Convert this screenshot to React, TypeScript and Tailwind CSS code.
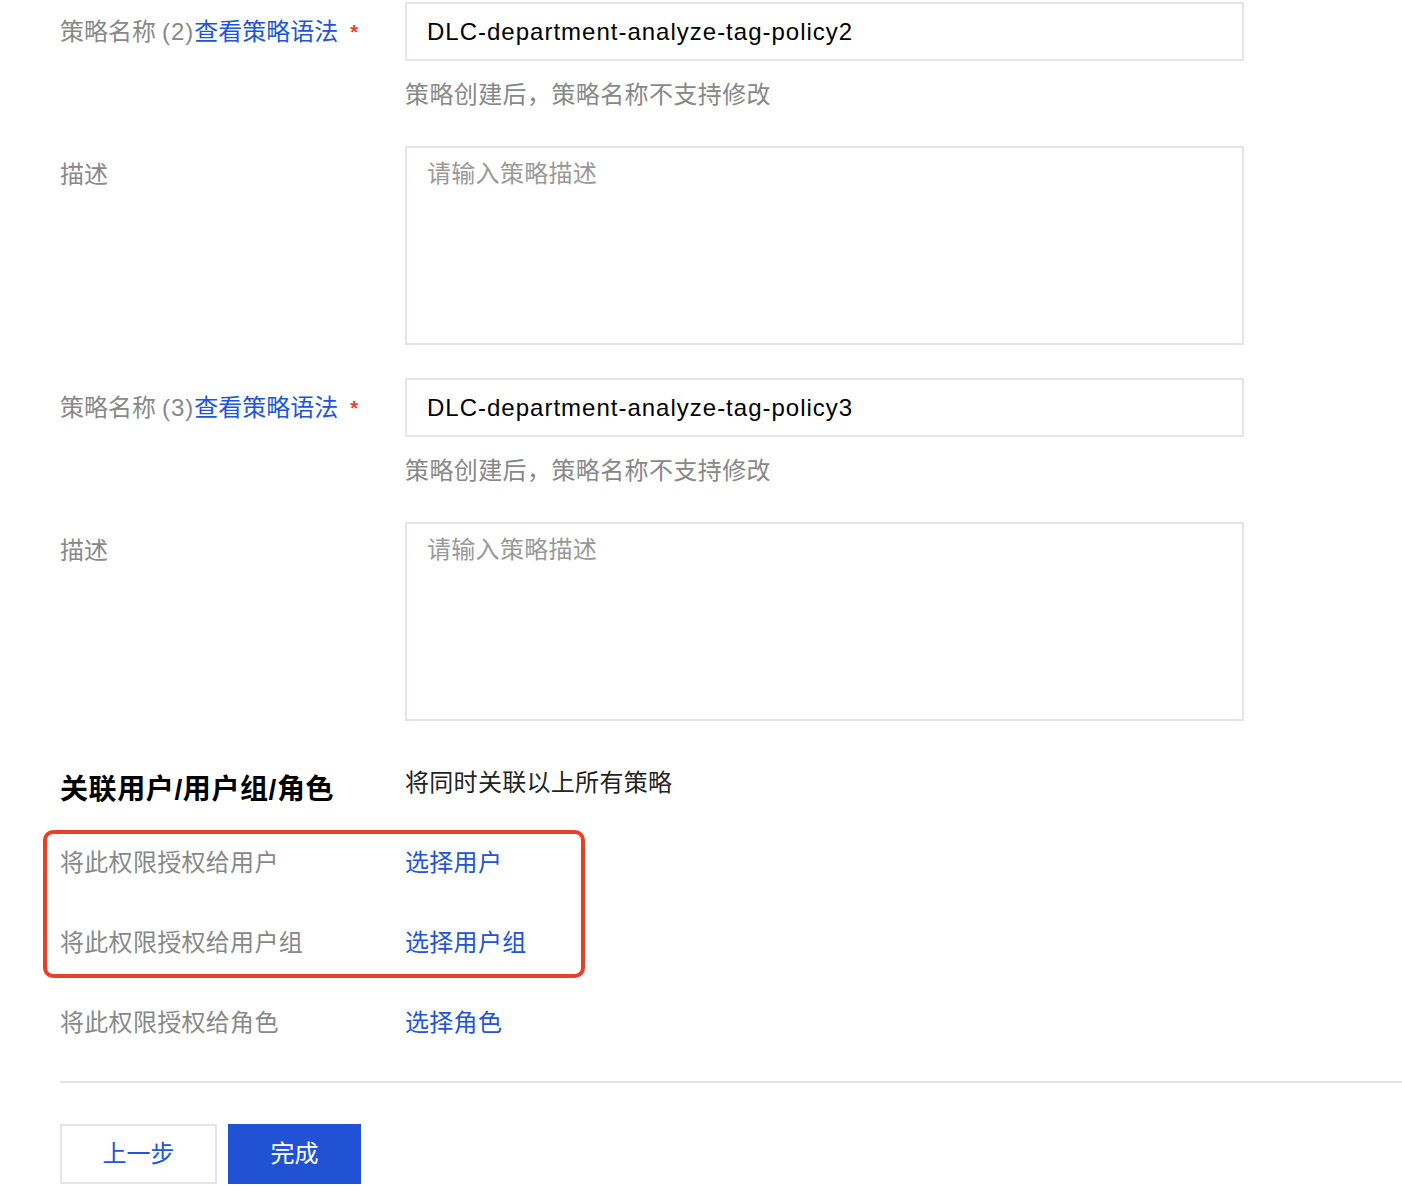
import React from 'react';

const font = { fontFamily: '"Liberation Sans", "Noto Sans CJK SC", sans-serif' };

function NameRow({ index, value }: { index: number; value: string }) {
  return (
    <>
      <div className="flex">
        <div className="w-[345px] h-[59px] flex items-center text-[24px] text-[#888888] whitespace-nowrap">
          策略名称 <span className="tracking-[1px] ml-[6px]">({index})</span>
          <span className="text-[#2154d6]">查看策略语法</span>
          <span className="text-[#e5432f] text-[20px] font-bold ml-[12px]">*</span>
        </div>
        <div className="w-[839px] h-[59px] border-2 border-[#e4e4ea] flex items-center pl-[20px] text-[24px] tracking-[1px] text-black">
          {value}
        </div>
      </div>
      <div className="ml-[345px] mt-[18px] leading-[32px] text-[24px] tracking-[0.4px] text-[#888888]">
        策略创建后，策略名称不支持修改
      </div>
      <div className="flex mt-[35px]">
        <div className="w-[345px] pt-[13px] leading-[32px] text-[24px] text-[#888888]">描述</div>
        <div className="w-[839px] h-[199px] border-2 border-[#e4e4ea] pt-[10px] pl-[20px] leading-[32px] text-[24px] tracking-[0.3px] text-[#999999]">
          请输入策略描述
        </div>
      </div>
    </>
  );
}

function GrantRow({ label, action }: { label: string; action: string }) {
  return (
    <div className="flex h-[32px] items-center leading-[32px] text-[24px] tracking-[0.3px]">
      <div className="w-[345px] text-[#888888]">{label}</div>
      <div className="text-[#2154d6]">{action}</div>
    </div>
  );
}

export default function App() {
  return (
    <div className="min-h-screen bg-white pl-[60px] pt-[2px]" style={font}>
      <NameRow index={2} value="DLC-department-analyze-tag-policy2" />
      <div className="mt-[33px]">
        <NameRow index={3} value="DLC-department-analyze-tag-policy3" />
      </div>

      {/* 关联 */}
      <div className="flex items-start mt-[46px]">
        <div className="w-[345px] pt-[4px] leading-[38px] text-[28px] font-bold tracking-[0.6px] text-black">
          关联用户/用户组/角色
        </div>
        <div className="leading-[32px] text-[24px] tracking-[0.3px] text-[#222222]">将同时关联以上所有策略</div>
      </div>

      <div className="relative mt-[38px] flex flex-col gap-[48px]">
        <GrantRow label="将此权限授权给用户" action="选择用户" />
        <GrantRow label="将此权限授权给用户组" action="选择用户组" />
        <div className="absolute left-[-17px] top-[-17px] w-[542px] h-[148px] border-[4px] border-[#e8412a] rounded-[10px]"></div>
      </div>
      <div className="mt-[48px]">
        <GrantRow label="将此权限授权给角色" action="选择角色" />
      </div>

      <div className="mt-[42px] h-[2px] bg-[#e4e4ea]"></div>

      <div className="mt-[41px] flex gap-[11px]">
        <button className="w-[157px] h-[60px] border-2 border-[#e4e4ea] bg-white text-[24px] text-[#2154d6]">
          上一步
        </button>
        <button className="w-[133px] h-[60px] bg-[#2152d4] text-[24px] text-white">完成</button>
      </div>
    </div>
  );
}
